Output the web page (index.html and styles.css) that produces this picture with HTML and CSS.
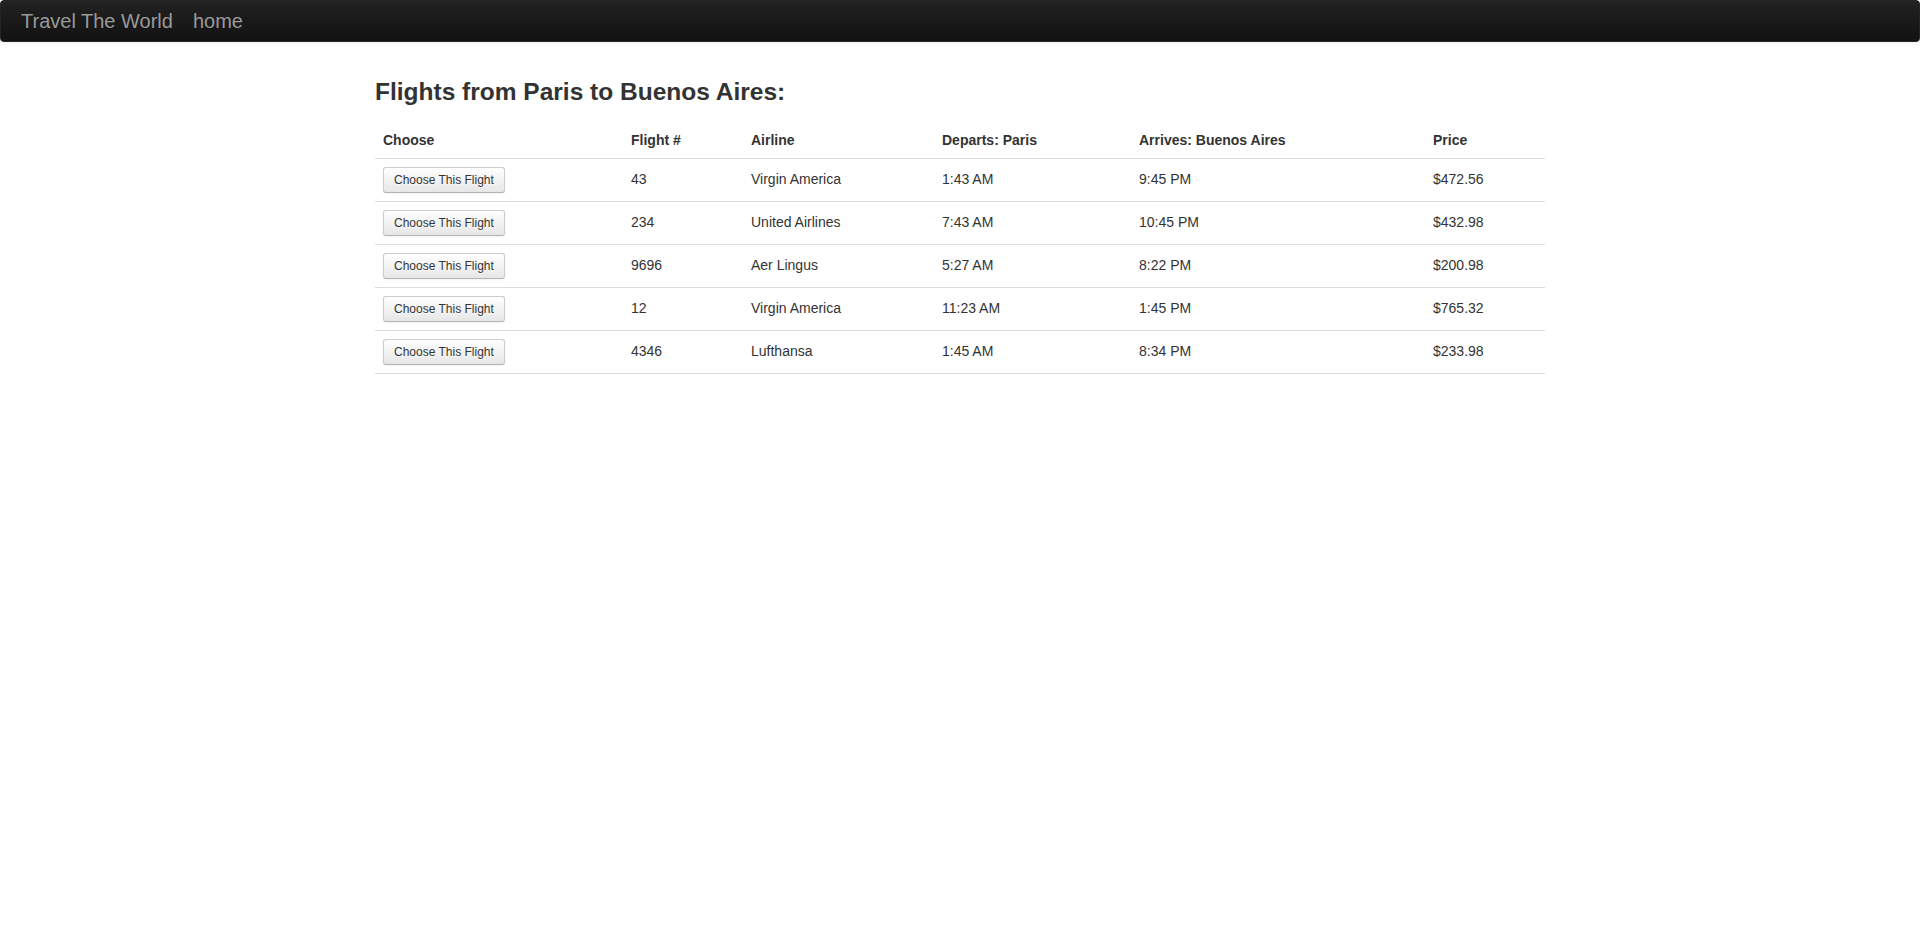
FILE: index.html
```html
<!DOCTYPE html>
<html>
<head>
<meta charset="utf-8">
<title>Travel The World</title>
<link rel="stylesheet" href="styles.css">
</head>
<body>
<div class="navbar">
  <div class="navbar-inner">
    <a class="brand" href="#">Travel The World</a>
    <a class="brand" href="#">home</a>
  </div>
</div>
<div class="container">
  <h3 class="title">Flights from Paris to Buenos Aires:</h3>
  <table class="table">
    <thead>
      <tr>
        <th class="c-choose">Choose</th>
        <th class="c-num">Flight #</th>
        <th class="c-air">Airline</th>
        <th class="c-dep">Departs: Paris</th>
        <th class="c-arr">Arrives: Buenos Aires</th>
        <th class="c-price">Price</th>
      </tr>
    </thead>
    <tbody>
      <tr><td><button class="btn">Choose This Flight</button></td><td>43</td><td>Virgin America</td><td>1:43 AM</td><td>9:45 PM</td><td>$472.56</td></tr>
      <tr><td><button class="btn">Choose This Flight</button></td><td>234</td><td>United Airlines</td><td>7:43 AM</td><td>10:45 PM</td><td>$432.98</td></tr>
      <tr><td><button class="btn">Choose This Flight</button></td><td>9696</td><td>Aer Lingus</td><td>5:27 AM</td><td>8:22 PM</td><td>$200.98</td></tr>
      <tr><td><button class="btn">Choose This Flight</button></td><td>12</td><td>Virgin America</td><td>11:23 AM</td><td>1:45 PM</td><td>$765.32</td></tr>
      <tr><td><button class="btn">Choose This Flight</button></td><td>4346</td><td>Lufthansa</td><td>1:45 AM</td><td>8:34 PM</td><td>$233.98</td></tr>
    </tbody>
  </table>
</div>
</body>
</html>
```

FILE: styles.css
```css
html, body {
  margin: 0;
  padding: 0;
}
body {
  font-family: "Liberation Sans", Arial, Helvetica, sans-serif;
  font-size: 14px;
  line-height: 20px;
  color: #333333;
  background: #ffffff;
}
.navbar {
  margin-bottom: 20px;
}
.navbar-inner {
  min-height: 40px;
  padding: 0 20px;
  background-color: #1b1b1b;
  background-image: linear-gradient(to bottom, #222222, #111111);
  border: 1px solid #252525;
  border-radius: 4px;
  box-shadow: 0 1px 4px rgba(0, 0, 0, 0.065);
  display: flex;
  align-items: flex-start;
}
.brand {
  display: block;
  padding: 10px 20px;
  margin-left: -20px;
  font-size: 20px;
  font-weight: 200;
  line-height: 20px;
  color: #999999;
  text-decoration: none;
}
.container {
  display: flow-root;
  width: 1170px;
  margin: 0 auto;
}
.title {
  margin: 10px 0;
  font-size: 24.5px;
  line-height: 40px;
  font-weight: bold;
  color: #333333;
}
.table {
  width: 100%;
  table-layout: fixed;
  border-collapse: collapse;
  border-spacing: 0;
  margin-bottom: 20px;
}
.table th, .table td {
  box-sizing: border-box;
  padding: 8px;
  line-height: 20px;
  text-align: left;
  vertical-align: baseline;
}
.table th {
  font-weight: bold;
}
.table td {
  border-top: 1px solid #dddddd;
}
.table tbody tr:last-child td {
  border-bottom: 1px solid #dddddd;
}
.c-choose { width: 248px; }
.c-num { width: 120px; }
.c-air { width: 191px; }
.c-dep { width: 197px; }
.c-arr { width: 294px; }
.c-price { width: 120px; }
.btn {
  display: inline-block;
  box-sizing: border-box;
  height: 26px;
  padding: 2px 10px;
  margin: 0;
  font-family: "Liberation Sans", Arial, Helvetica, sans-serif;
  font-size: 12px;
  line-height: 20px;
  color: #333333;
  text-shadow: 0 1px 1px rgba(255, 255, 255, 0.75);
  background-color: #f5f5f5;
  background-image: linear-gradient(to bottom, #ffffff, #e6e6e6);
  border: 1px solid #cccccc;
  border-bottom-color: #b3b3b3;
  border-radius: 3px;
  box-shadow: inset 0 1px 0 rgba(255, 255, 255, 0.2), 0 1px 2px rgba(0, 0, 0, 0.05);
  cursor: pointer;
  vertical-align: baseline;
}
```
